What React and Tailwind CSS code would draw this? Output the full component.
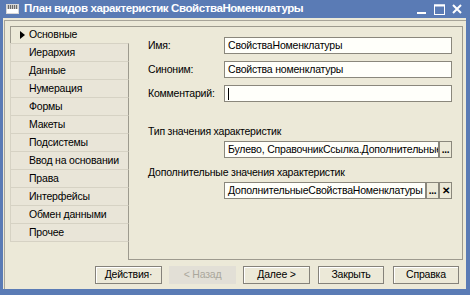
import React from "react";

const tabs = [
  "Основные",
  "Иерархия",
  "Данные",
  "Нумерация",
  "Формы",
  "Макеты",
  "Подсистемы",
  "Ввод на основании",
  "Права",
  "Интерфейсы",
  "Обмен данными",
  "Прочее",
];

function TitleIcon() {
  return (
    <svg width="13" height="10" viewBox="0 0 13 10" className="shrink-0">
      <rect x="0.5" y="0.5" width="12" height="9" fill="#ffffff" stroke="#d8d8d8" />
      <rect x="1" y="1" width="11" height="4" fill="#c8c8c8" />
      {[2, 4, 6, 8, 10].map((x) => (
        <rect key={x} x={x} y="1" width="1" height="4" fill="#6a6a6a" />
      ))}
    </svg>
  );
}

function WinButtons() {
  return (
    <div className="flex items-center gap-[7px]">
      <svg width="10" height="10" viewBox="0 0 10 10">
        <rect x="0" y="8" width="9" height="2" fill="#fff" />
      </svg>
      <svg width="11" height="11" viewBox="0 0 11 11">
        <rect x="0.5" y="1" width="10" height="9.5" fill="none" stroke="#fff" />
        <rect x="0" y="0.5" width="11" height="2" fill="#fff" />
      </svg>
      <svg width="10" height="10" viewBox="0 0 10 10">
        <path d="M1 1 L9 9 M9 1 L1 9" stroke="#fff" strokeWidth="2" />
      </svg>
    </div>
  );
}

function Field({ value, cursor }) {
  return (
    <div className="h-[17px] bg-[#fffffa] border border-[#8a877c] flex items-center px-[3px] overflow-hidden whitespace-nowrap text-black">
      {cursor && <span className="w-px h-[12px] bg-black" />}
      {value}
    </div>
  );
}

function SmallBtn({ children }) {
  return (
    <div className="w-[13px] h-[17px] shrink-0 bg-[#ece9d8] border border-[#8a877c] flex items-center justify-center text-[10px] font-bold leading-none text-black">
      {children}
    </div>
  );
}

function Btn({ children, disabled, className = "" }) {
  return (
    <div
      className={`h-[18px] flex items-center justify-center ${
        disabled
          ? "bg-[#e2dfd6] text-[#aaa79c]"
          : "bg-[#ece9d8] border border-[#85827a] shadow-[inset_1px_1px_0_#ffffff] text-black"
      } ${className}`}
    >
      {children}
    </div>
  );
}

export default function App() {
  return (
    <div className="w-[470px] h-[295px] bg-[#5a7bb5] flex flex-col overflow-hidden font-['Liberation_Sans',sans-serif] text-[10.5px] tracking-[-0.2px] text-black">
      {/* title bar */}
      <div className="h-[18px] flex items-center pl-[6px] pr-[8px] shrink-0">
        <TitleIcon />
        <span className="ml-[5px] text-white font-bold text-[11.5px] tracking-[-0.4px] whitespace-nowrap">
          План видов характеристик СвойстваНоменклатуры
        </span>
        <div className="flex-1" />
        <WinButtons />
      </div>

      {/* window body */}
      <div className="flex-1 ml-[3px] mr-[4px] mb-[6px] bg-[#ece9d8] pt-[2px] pl-[1px] flex flex-col min-w-0">
        <div className="flex-1 border-t border-l border-[#a7a499] flex flex-col pl-[5px] pr-[3px] pt-[5px] min-w-0">
          {/* tab control */}
          <div className="h-[234px] flex min-w-0">
            <div className="w-[119px] shrink-0 flex flex-col">
              {tabs.map((t, i) =>
                i === 0 ? (
                  <div
                    key={t}
                    className="h-[17px] flex items-center border-t border-l border-[#9d9a8e] bg-[#ece9d8]"
                  >
                    <span className="w-[18px] flex justify-end pr-[4px]">
                      <svg width="5" height="8" viewBox="0 0 5 8">
                        <path d="M0 0 L5 4 L0 8 Z" fill="#000" />
                      </svg>
                    </span>
                    <span>{t}</span>
                  </div>
                ) : (
                  <div
                    key={t}
                    className="h-[18px] flex items-center pl-[18px] border-t border-l border-[#d6d2c4] border-r-[#9d9a8e] border-r bg-[#e9e5d8] whitespace-nowrap"
                  >
                    {t}
                  </div>
                )
              )}
              <div className="flex-1 border-t border-[#d6d2c4] border-r border-r-[#9d9a8e]" />
            </div>

            {/* panel */}
            <div className="flex-1 min-w-0 overflow-hidden border-t border-r border-b border-[#9d9a8e] pl-[19px] pr-[10px] pt-[10px]">
              <div className="flex flex-col gap-[7px]">
                <div className="flex items-center">
                  <span className="w-[76px] shrink-0">Имя:</span>
                  <div className="flex-1 min-w-0">
                    <Field value="СвойстваНоменклатуры" />
                  </div>
                </div>
                <div className="flex items-center">
                  <span className="w-[76px] shrink-0">Синоним:</span>
                  <div className="flex-1 min-w-0">
                    <Field value="Свойства номенклатуры" />
                  </div>
                </div>
                <div className="flex items-center">
                  <span className="w-[76px] shrink-0">Комментарий:</span>
                  <div className="flex-1 min-w-0">
                    <Field value="" cursor />
                  </div>
                </div>
              </div>

              <div className="mt-[23px] leading-[13px]">Тип значения характеристик</div>
              <div className="mt-[3px] ml-[76px] flex min-w-0">
                <div className="flex-1 min-w-0">
                  <Field value="Булево, СправочникСсылка.Дополнительные" />
                </div>
                <SmallBtn>...</SmallBtn>
              </div>

              <div className="mt-[8px] leading-[13px]">Дополнительные значения характеристик</div>
              <div className="mt-[3px] ml-[76px] flex min-w-0">
                <div className="flex-1 min-w-0">
                  <Field value="ДополнительныеСвойстваНоменклатуры" />
                </div>
                <SmallBtn>...</SmallBtn>
                <SmallBtn>✕</SmallBtn>
              </div>
            </div>
          </div>

          {/* buttons */}
          <div className="mt-[6px] flex pl-[85px]">
            <Btn className="w-[67px] justify-between px-[7px]">
              <span>Действия</span>
              <span>·</span>
            </Btn>
            <Btn disabled className="w-[67px] ml-[7px]">
              &lt; Назад
            </Btn>
            <Btn className="w-[67px] ml-[7px]">Далее &gt;</Btn>
            <Btn className="w-[66px] ml-[8px]">Закрыть</Btn>
            <Btn className="w-[66px] ml-[9px]">Справка</Btn>
          </div>
        </div>
      </div>
    </div>
  );
}
